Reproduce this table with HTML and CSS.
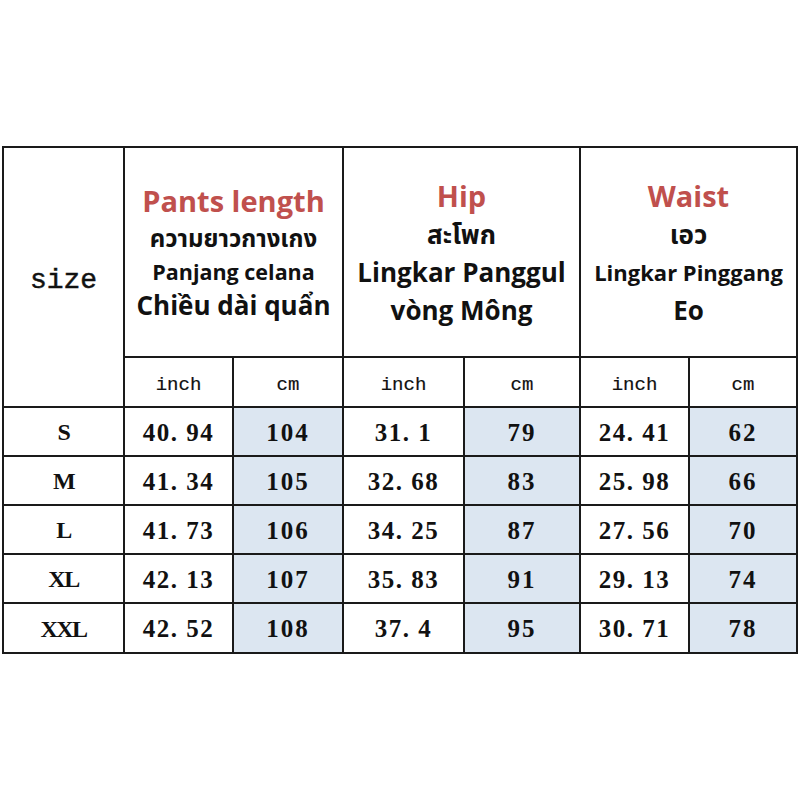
FILE: index.html
```html
<!DOCTYPE html>
<html>
<head>
<meta charset="utf-8">
<link rel="stylesheet" href="styles.css">
</head>
<body>
<table class="chart">
  <colgroup>
    <col class="c-size"><col class="c-a"><col class="c-b"><col class="c-c"><col class="c-d"><col class="c-e"><col class="c-f">
  </colgroup>
  <tr class="head">
    <td rowspan="2" class="size-head">size</td>
    <td colspan="2" class="group pants">
      <div class="red l-red">Pants length</div>
      <div class="thai l-thai1">ความยาวกางเกง</div>
      <div class="semi l-panjang">Panjang celana</div>
      <div class="bold l-chieu">Chiều dài quẩn</div>
    </td>
    <td colspan="2" class="group hip">
      <div class="red l-red">Hip</div>
      <div class="thai thai-big l-thai2">สะโพก</div>
      <div class="bold l-std">Lingkar Panggul</div>
      <div class="bold l-std">vòng Mông</div>
    </td>
    <td colspan="2" class="group waist">
      <div class="red l-red">Waist</div>
      <div class="thai thai-big l-thai2">เอว</div>
      <div class="semi semi-w l-std">Lingkar Pinggang</div>
      <div class="bold l-std">Eo</div>
    </td>
  </tr>
  <tr class="units">
    <td>inch</td><td>cm</td><td>inch</td><td>cm</td><td>inch</td><td>cm</td>
  </tr>
  <tr class="data">
    <td class="sz">S</td><td>40. 94</td><td class="cm">104</td><td>31. 1</td><td class="cm">79</td><td>24. 41</td><td class="cm">62</td>
  </tr>
  <tr class="data">
    <td class="sz">M</td><td>41. 34</td><td class="cm">105</td><td>32. 68</td><td class="cm">83</td><td>25. 98</td><td class="cm">66</td>
  </tr>
  <tr class="data">
    <td class="sz">L</td><td>41. 73</td><td class="cm">106</td><td>34. 25</td><td class="cm">87</td><td>27. 56</td><td class="cm">70</td>
  </tr>
  <tr class="data">
    <td class="sz">XL</td><td>42. 13</td><td class="cm">107</td><td>35. 83</td><td class="cm">91</td><td>29. 13</td><td class="cm">74</td>
  </tr>
  <tr class="data last">
    <td class="sz">XXL</td><td>42. 52</td><td class="cm">108</td><td>37. 4</td><td class="cm">95</td><td>30. 71</td><td class="cm">78</td>
  </tr>
</table>
</body>
</html>
```
FILE: styles.css
```css
html, body {
  margin: 0;
  padding: 0;
  background: #ffffff;
}
body {
  padding: 146px 0 0 2px;
}
.chart {
  border-collapse: collapse;
  table-layout: fixed;
  width: 795px;
  color: #111;
}
.c-size { width: 121px; }
.c-a { width: 109px; }
.c-b { width: 110px; }
.c-c { width: 121px; }
.c-d { width: 116px; }
.c-e { width: 109px; }
.c-f { width: 108px; }

.chart td {
  border: 2px solid #1a1a1a;
  padding: 0;
  text-align: center;
  vertical-align: middle;
}
.head td { height: 206px; }
.units td { height: 42px; }
.data td { height: 45px; }
.data.last td { height: 46px; }

.size-head {
  font-family: "Liberation Mono", "DejaVu Sans Mono", monospace;
  font-size: 28px;
  -webkit-text-stroke: 0.5px #111;
  padding-top: 6px !important;
}
.group {
  font-family: "Open Sans", "Noto Sans", "Noto Sans Thai", "Leelawadee UI", sans-serif;
  white-space: nowrap;
  padding-top: 2px !important;
}
.red {
  color: #c0504d;
  font-weight: 700;
  font-size: 29px;
}
.thai {
  font-weight: 700;
  font-size: 24px;
}
.thai-big { font-size: 26px; }
.semi {
  font-weight: 700;
  font-size: 21.5px;
}
.semi-w { font-size: 22px; }
.bold {
  font-weight: 700;
  font-size: 26px;
}
.l-red { line-height: 38px; }
.l-thai1 { line-height: 36px; }
.l-thai2 { line-height: 38px; }
.l-panjang { line-height: 31px; }
.l-chieu { line-height: 37px; }
.l-std { line-height: 38px; }

.units td {
  font-family: "Liberation Mono", "DejaVu Sans Mono", monospace;
  font-size: 19px;
  -webkit-text-stroke: 0.2px #111;
  padding-top: 6px;
}
.data td {
  font-family: "Liberation Serif", "DejaVu Serif", serif;
  font-weight: 700;
  font-size: 25px;
  letter-spacing: 1.5px;
  white-space: nowrap;
  padding-top: 2px;
}
.data td.sz {
  font-size: 24px;
  letter-spacing: -1.5px;
}
.data td.cm {
  background: #dce6f1;
  letter-spacing: 2px;
}
```
